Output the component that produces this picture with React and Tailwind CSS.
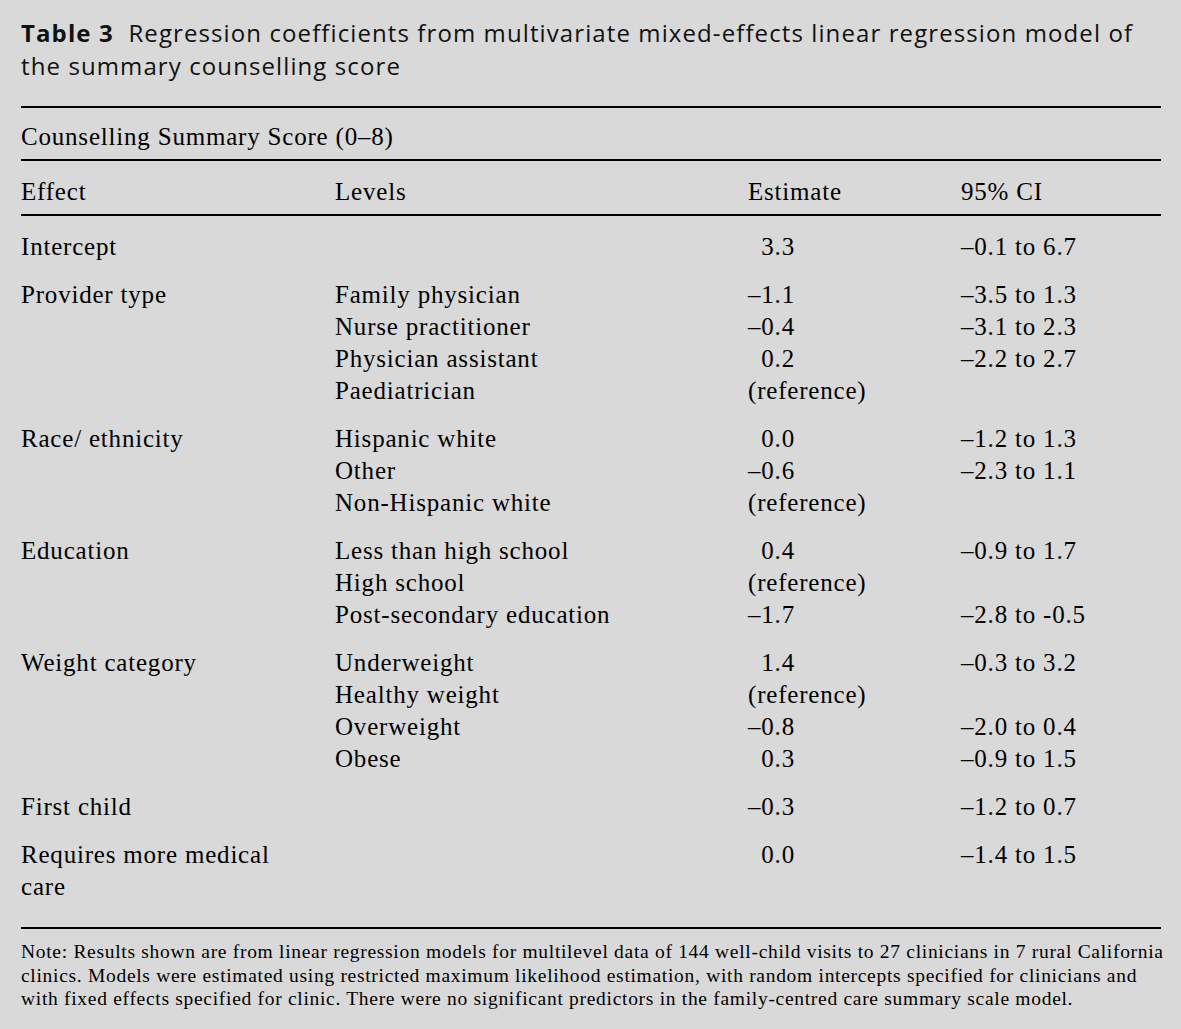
const groups = [
  { effect: "Intercept", rows: [["", "3.3", "–0.1 to 6.7"]] },
  {
    effect: "Provider type",
    rows: [
      ["Family physician", "–1.1", "–3.5 to 1.3"],
      ["Nurse practitioner", "–0.4", "–3.1 to 2.3"],
      ["Physician assistant", "0.2", "–2.2 to 2.7"],
      ["Paediatrician", "(reference)", ""],
    ],
  },
  {
    effect: "Race/ ethnicity",
    rows: [
      ["Hispanic white", "0.0", "–1.2 to 1.3"],
      ["Other", "–0.6", "–2.3 to 1.1"],
      ["Non-Hispanic white", "(reference)", ""],
    ],
  },
  {
    effect: "Education",
    rows: [
      ["Less than high school", "0.4", "–0.9 to 1.7"],
      ["High school", "(reference)", ""],
      ["Post-secondary education", "–1.7", "–2.8 to -0.5"],
    ],
  },
  {
    effect: "Weight category",
    rows: [
      ["Underweight", "1.4", "–0.3 to 3.2"],
      ["Healthy weight", "(reference)", ""],
      ["Overweight", "–0.8", "–2.0 to 0.4"],
      ["Obese", "0.3", "–0.9 to 1.5"],
    ],
  },
  { effect: "First child", rows: [["", "–0.3", "–1.2 to 0.7"]] },
  { effect: "Requires more medical\ncare", rows: [["", "0.0", "–1.4 to 1.5"]] },
];

function Estimate({ value }) {
  // positive numbers line up with the digits after a minus sign
  const pad = /^[0-9]/.test(value);
  return (
    <span>
      {pad && <span className="invisible">–</span>}
      {value}
    </span>
  );
}

export default function App() {
  return (
    <div className="min-h-[1029px] w-[1181px] bg-[#d9d9d9] pl-[21px] pr-[20px] pt-[16px] text-black">
      <h1 className="font-['Open_Sans','Noto_Sans',sans-serif] text-[24px] leading-[33px] tracking-[1.1px] text-[#111]">
        <span className="font-bold">Table 3</span>&nbsp; Regression coefficients from multivariate mixed-effects linear regression model of
        <br />
        the summary counselling score
      </h1>

      <div className="mt-[24px] font-['Liberation_Serif','Times_New_Roman',serif] text-[25px] leading-[32px] tracking-[0.8px]">
        <div className="border-t-2 border-black pt-[13px] pb-[6px]">Counselling Summary Score (0–8)</div>

        <div className="grid grid-cols-[314px_413px_213px_1fr] border-t-2 border-black pt-[15px] pb-[6px]">
          <div>Effect</div>
          <div>Levels</div>
          <div>Estimate</div>
          <div>95% CI</div>
        </div>

        <div className="flex flex-col gap-[16px] border-t-2 border-black pt-[15px] pb-[24px]">
          {groups.map((g) => (
            <div key={g.effect} className="grid grid-cols-[314px_413px_213px_1fr]">
              <div className="whitespace-pre-line" style={{ gridRow: `span ${g.rows.length}` }}>
                {g.effect}
              </div>
              {g.rows.map((r, i) => (
                <div key={i} className="contents">
                  <div>{r[0]}</div>
                  <div>
                    <Estimate value={r[1]} />
                  </div>
                  <div>{r[2]}</div>
                </div>
              ))}
            </div>
          ))}
        </div>

        <div className="border-t-2 border-black pt-[11px] text-[19.5px] leading-[23.5px] tracking-[0.7px] whitespace-nowrap">
          Note: Results shown are from linear regression models for multilevel data of 144 well-child visits to 27 clinicians in 7 rural California
          <br />
          clinics. Models were estimated using restricted maximum likelihood estimation, with random intercepts specified for clinicians and
          <br />
          with fixed effects specified for clinic. There were no significant predictors in the family-centred care summary scale model.
        </div>
      </div>
    </div>
  );
}
